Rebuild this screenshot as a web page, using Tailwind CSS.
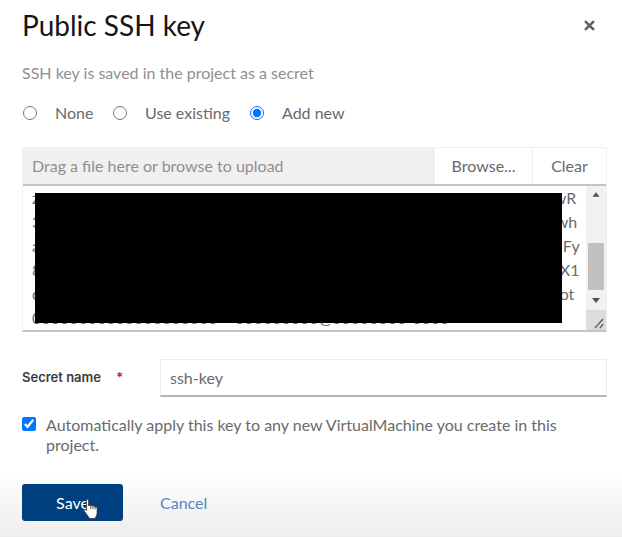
<!DOCTYPE html>
<html lang="en">
<head>
<meta charset="utf-8">
<title>Public SSH key</title>
<meta name="viewport" content="width=device-width, initial-scale=1">
<script src="https://cdn.jsdelivr.net/npm/@tailwindcss/browser@4"></script>
</head>
<body class="min-h-screen bg-linear-to-b from-white from-88% to-[#ededed] font-['Lato','Open_Sans',sans-serif] text-base text-[#6a6a6a]">
<main class="pr-[15px] pl-[22px] pt-[7px]">
  <header class="flex items-center justify-between pr-3">
    <h1 class="text-[28px] leading-9 text-[#151515]">Public SSH key</h1>
    <button type="button" aria-label="Close" class="size-[11px]">
      <svg viewBox="0 0 11 11" class="size-[11px]" fill="none" stroke="#606060" stroke-width="2.6" stroke-linecap="round"><path d="M1.800 1.800l7.400 7.400M9.200 1.800l-7.400 7.400"/></svg>
    </button>
  </header>
  <p class="mt-[18px] leading-6 text-[#8f8f8f]">SSH key is saved in the project as a secret</p>
  <fieldset class="mt-4 flex h-6 items-center" aria-label="SSH key source">
    <input type="radio" name="source" id="none" class="ml-px size-[14px]">
    <label for="none" class="ml-[18px] w-[58px]">None</label>
    <input type="radio" name="source" id="existing" class="size-[14px]">
    <label for="existing" class="ml-[18px] w-[105px]">Use existing</label>
    <input type="radio" name="source" id="new" checked class="size-[14px]">
    <label for="new" class="ml-[18px]">Add new</label>
  </fieldset>
  <div class="mt-[22px] border border-[#f0f0f0] border-b-2 border-b-[#c4c4c4]">
    <div class="flex h-[38px] border-b-2 border-[#c4c4c4]">
      <input type="text" readonly aria-label="Filename" placeholder="Drag a file here or browse to upload" class="min-w-0 flex-1 bg-[#f0f0f0] px-[9px] placeholder:text-[#8f8f8f]">
      <button type="button" class="w-[98px] border-r border-[#f0f0f0]">Browse...</button>
      <button type="button" class="w-[73px]">Clear</button>
    </div>
    <div class="relative flex h-[144px]">
      <textarea aria-label="SSH key" spellcheck="false" class="min-w-0 flex-1 resize-none overflow-hidden whitespace-pre pl-[9px] leading-6">
z 0000000000000000000000000000000000000000000000000000000wR
3 0000000000000000000000000000000000000000000000000000000wh
a 0000000000000000000000000000000000000000000000000000000  Fy
8 0000000000000000000000000000000000000000000000000000000 X1
o 0000000000000000000000000000000000000000000000000000000 ot
00000000000000000000 = 000000000@00000000-0000</textarea>
      <div class="absolute top-[7px] right-[44px] bottom-[7px] left-3 bg-black"></div>
      <div class="flex w-5 flex-col bg-[#f1f1f1]" aria-hidden="true">
        <svg viewBox="0 0 20 20" class="h-[18px] w-5" fill="#505050"><path d="M10 7l4 5H6z"/></svg>
        <div class="flex-1"></div>
        <div class="mx-[2px] h-[47px] bg-[#c1c1c1]"></div>
        <svg viewBox="0 0 20 20" class="h-5 w-5" fill="#505050"><path d="M6 8h8l-4 5z"/></svg>
        <svg viewBox="0 0 20 20" class="size-5 bg-[#dcdcdc]" fill="none" stroke="#666" stroke-width="1.5"><path d="M9 18l8-9M14 18l3-4"/></svg>
      </div>
    </div>
  </div>
  <div class="mt-[27px] flex items-center">
    <label for="secret" class="w-[138px] font-['Inter',sans-serif] text-[13px] font-semibold text-[#3c3c3c]">Secret name <span class="ml-3 text-[#c9190b]">*</span></label>
    <input id="secret" type="text" value="ssh-key" class="h-[38px] min-w-0 flex-1 border border-[#ececec] border-b-2 border-b-[#b4b4b4] bg-white px-[9px]">
  </div>
  <div class="mt-[18px] flex items-start gap-[10px] pr-7">
    <input id="apply" type="checkbox" checked class="mt-[2px] size-[14px] shrink-0">
    <label for="apply" class="leading-5">Automatically apply this key to any new VirtualMachine you create in this project.</label>
  </div>
  <footer class="mt-[29px] flex">
    <button type="button" class="relative h-[37px] w-[101px] rounded-[3px] bg-[#004080] text-white">Save
      <svg viewBox="0 0 16 22" class="absolute top-[14px] left-[61px] h-[22px] w-4" fill="#fff" stroke="#333" stroke-width=".8" stroke-linejoin="round"><path d="M3.500 1.500c1-.8 2 0 2 1V8c.3-1 2-1 2.300 0 .5-.8 2-.6 2.200.4.600-.6 2-.3 2.100.7.700-.5 2 0 2 1v5c0 2-1.100 3-1.600 4.400v1H6v-1c-1.500-2-3-4-4.800-6.500-.7-1.200.7-2.100 1.700-1.200l.6.700z"/><path d="M7.800 8v3M10 8.400V11M12.100 9.100v2.200"/></svg>
    </button>
    <a href="#" class="ml-[37px] self-center text-[#4f87c7]">Cancel</a>
  </footer>
</main>
</body>
</html>
